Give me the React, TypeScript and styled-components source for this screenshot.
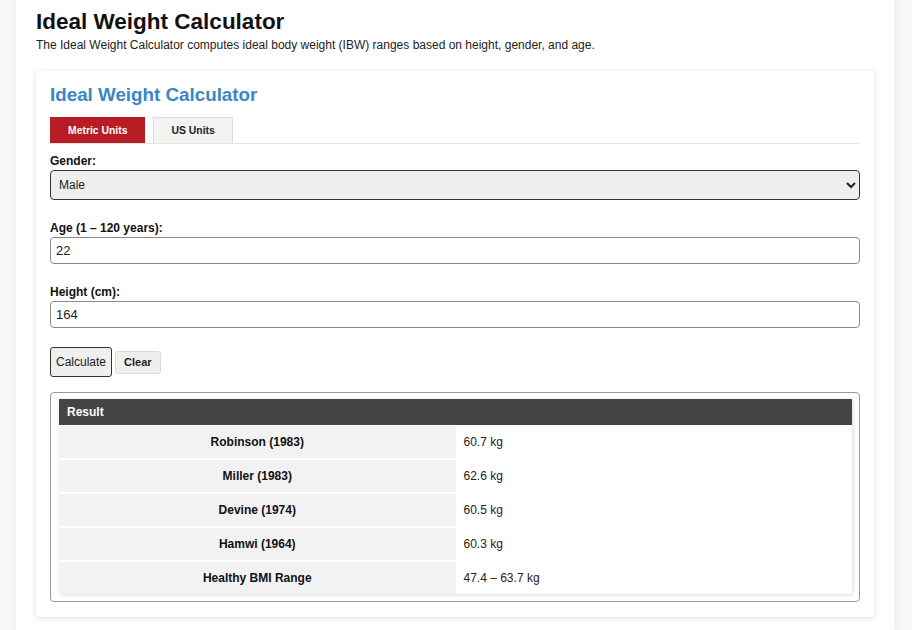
import React from "react";
import styled, { createGlobalStyle } from "styled-components";

const Global = createGlobalStyle`
  html, body { margin: 0; padding: 0; background: #f7f7f7; }
  body { font-family: "Liberation Sans", Arial, sans-serif; color: #222; }
`;

const Page = styled.div`
  margin: 0 16px;
  width: 878px;
  min-height: 630px;
  background: #fff;
  box-shadow: 0 0 8px rgba(0,0,0,0.06);
  padding: 9px 20px 12px;
  box-sizing: border-box;
`;

const Title = styled.h1`
  margin: 0;
  font-size: 22.5px;
  line-height: 26px;
  font-weight: bold;
  color: #111;
`;

const Subtitle = styled.p`
  margin: 2px 0 0;
  font-size: 12px;
  line-height: 16px;
  color: #222;
`;

const Card = styled.section`
  margin-top: 18px;
  background: #fff;
  border-radius: 4px;
  box-shadow: 0 1px 6px rgba(0,0,0,0.13);
  padding: 12px 14px 15px 14px;
`;

const CardTitle = styled.h2`
  margin: 0;
  font-size: 18.8px;
  line-height: 24px;
  font-weight: bold;
  color: #3b86c4;
`;

const Tabs = styled.div`
  display: flex;
  gap: 8px;
  margin-top: 10px;
  border-bottom: 1px solid #e4e4e4;
`;

const Tab = styled.button<{ $active?: boolean }>`
  height: 26px;
  padding: 0 17px;
  border: 1px solid ${(p) => (p.$active ? "#b81d25" : "#dcdcdc")};
  border-bottom: none;
  background: ${(p) => (p.$active ? "#b81d25" : "#f3f3f3")};
  color: ${(p) => (p.$active ? "#fff" : "#222")};
  font-family: "Liberation Sans", Arial, sans-serif;
  font-size: 10.4px;
  font-weight: bold;
  cursor: pointer;
`;

const Field = styled.div`
  margin-top: 10px;
  & + & { margin-top: 21px; }
`;

const Label = styled.label`
  display: block;
  font-size: 12px;
  line-height: 15px;
  font-weight: bold;
  color: #111;
  margin-bottom: 1px;
`;

const Select = styled.select`
  display: block;
  width: 100%;
  height: 30px;
  box-sizing: border-box;
  border: 1px solid #333;
  border-radius: 4px;
  background: #efefef;
  font-family: "Liberation Sans", Arial, sans-serif;
  font-size: 12px;
  color: #222;
  padding: 0 4px;
`;

const Input = styled.input`
  display: block;
  width: 100%;
  height: 27px;
  box-sizing: border-box;
  border: 1px solid #8a8a8a;
  border-radius: 4px;
  background: #fff;
  font-family: "Liberation Sans", Arial, sans-serif;
  font-size: 13px;
  color: #222;
  padding: 0 5px;
`;

const Buttons = styled.div`
  display: flex;
  align-items: center;
  gap: 3px;
  margin-top: 19px;
`;

const Button = styled.button<{ $primary?: boolean }>`
  height: ${(p) => (p.$primary ? 30 : 23)}px;
  padding: 0 ${(p) => (p.$primary ? 5 : 8)}px;
  border: 1px solid ${(p) => (p.$primary ? "#333" : "#d8d8d8")};
  border-radius: 3px;
  background: #efefef;
  font-family: "Liberation Sans", Arial, sans-serif;
  font-size: ${(p) => (p.$primary ? 12 : 11)}px;
  font-weight: ${(p) => (p.$primary ? "normal" : "bold")};
  color: #222;
`;

const ResultBox = styled.div`
  margin-top: 15px;
  border: 1px solid #999;
  border-radius: 4px;
  padding: 6px 7px 7px 8px;
`;

const Table = styled.table`
  width: 100%;
  border-collapse: collapse;
  box-shadow: 1px 1px 4px rgba(0,0,0,0.15);
  font-size: 12px;
`;

const HeadCell = styled.th`
  background: #454545;
  color: #fff;
  text-align: left;
  font-weight: bold;
  height: 26px;
  padding: 0 8px;
`;

const Row = styled.tr`
  border-top: 2px solid #fff;
  &:first-child { border-top: 1px solid #fff; }
`;

const NameCell = styled.td`
  width: 50%;
  background: #f2f2f2;
  text-align: center;
  font-weight: bold;
  color: #111;
  height: 32px;
  padding: 0 8px;
`;

const ValueCell = styled.td`
  background: #fff;
  color: #222;
  padding: 0 8px;
`;

const results = [
  ["Robinson (1983)", "60.7 kg"],
  ["Miller (1983)", "62.6 kg"],
  ["Devine (1974)", "60.5 kg"],
  ["Hamwi (1964)", "60.3 kg"],
  ["Healthy BMI Range", "47.4 – 63.7 kg"],
];

export default function App() {
  return (
    <>
      <Global />
      <Page>
        <Title>Ideal Weight Calculator</Title>
        <Subtitle>
          The Ideal Weight Calculator computes ideal body weight (IBW) ranges based on height, gender, and age.
        </Subtitle>
        <Card>
          <CardTitle>Ideal Weight Calculator</CardTitle>
          <Tabs>
            <Tab $active>Metric Units</Tab>
            <Tab>US Units</Tab>
          </Tabs>
          <Field>
            <Label>Gender:</Label>
            <Select defaultValue="male">
              <option value="male">Male</option>
              <option value="female">Female</option>
            </Select>
          </Field>
          <Field>
            <Label>Age (1 – 120 years):</Label>
            <Input defaultValue="22" />
          </Field>
          <Field>
            <Label>Height (cm):</Label>
            <Input defaultValue="164" />
          </Field>
          <Buttons>
            <Button $primary>Calculate</Button>
            <Button>Clear</Button>
          </Buttons>
          <ResultBox>
            <Table>
              <thead>
                <tr>
                  <HeadCell colSpan={2}>Result</HeadCell>
                </tr>
              </thead>
              <tbody>
                {results.map(([n, v]) => (
                  <Row key={n}>
                    <NameCell>{n}</NameCell>
                    <ValueCell>{v}</ValueCell>
                  </Row>
                ))}
              </tbody>
            </Table>
          </ResultBox>
        </Card>
      </Page>
    </>
  );
}
